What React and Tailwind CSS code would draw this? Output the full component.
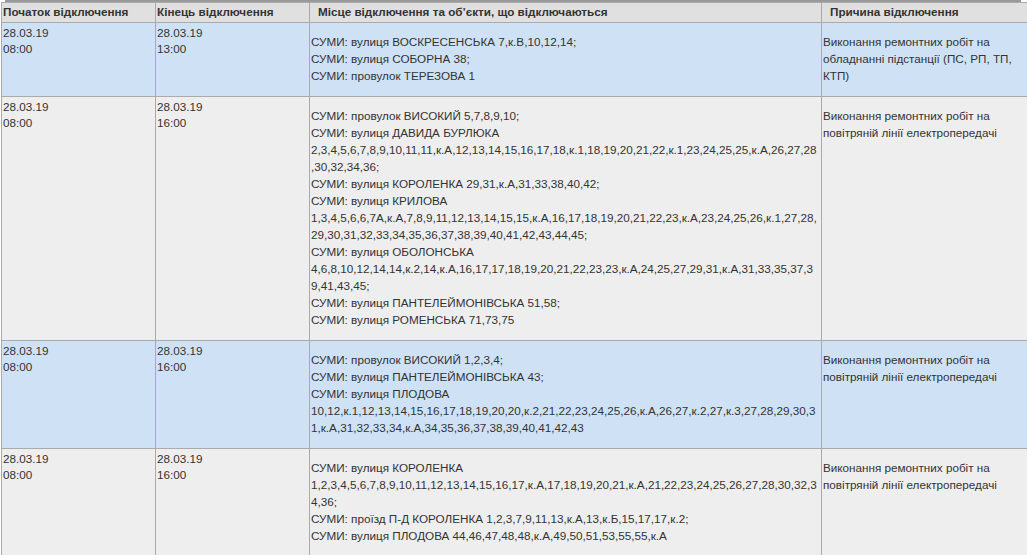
const rows = [
  {
    end: "13:00",
    blue: true,
    places: [
      "СУМИ: вулиця ВОСКРЕСЕНСЬКА 7,к.В,10,12,14;",
      "СУМИ: вулиця СОБОРНА 38;",
      "СУМИ: провулок ТЕРЕЗОВА 1",
    ],
    reason: ["Виконання ремонтних робіт на", "обладнанні підстанції (ПС, РП, ТП,", "КТП)"],
  },
  {
    end: "16:00",
    places: [
      "СУМИ: провулок ВИСОКИЙ 5,7,8,9,10;",
      "СУМИ: вулиця ДАВИДА БУРЛЮКА",
      "2,3,4,5,6,7,8,9,10,11,11,к.А,12,13,14,15,16,17,18,к.1,18,19,20,21,22,к.1,23,24,25,25,к.А,26,27,28",
      ",30,32,34,36;",
      "СУМИ: вулиця КОРОЛЕНКА 29,31,к.А,31,33,38,40,42;",
      "СУМИ: вулиця КРИЛОВА",
      "1,3,4,5,6,6,7А,к.А,7,8,9,11,12,13,14,15,15,к.А,16,17,18,19,20,21,22,23,к.А,23,24,25,26,к.1,27,28,",
      "29,30,31,32,33,34,35,36,37,38,39,40,41,42,43,44,45;",
      "СУМИ: вулиця ОБОЛОНСЬКА",
      "4,6,8,10,12,14,14,к.2,14,к.А,16,17,17,18,19,20,21,22,23,23,к.А,24,25,27,29,31,к.А,31,33,35,37,3",
      "9,41,43,45;",
      "СУМИ: вулиця ПАНТЕЛЕЙМОНІВСЬКА 51,58;",
      "СУМИ: вулиця РОМЕНСЬКА 71,73,75",
    ],
    reason: ["Виконання ремонтних робіт на", "повітряній лінії електропередачі"],
  },
  {
    end: "16:00",
    blue: true,
    places: [
      "СУМИ: провулок ВИСОКИЙ 1,2,3,4;",
      "СУМИ: вулиця ПАНТЕЛЕЙМОНІВСЬКА 43;",
      "СУМИ: вулиця ПЛОДОВА",
      "10,12,к.1,12,13,14,15,16,17,18,19,20,20,к.2,21,22,23,24,25,26,к.А,26,27,к.2,27,к.3,27,28,29,30,3",
      "1,к.А,31,32,33,34,к.А,34,35,36,37,38,39,40,41,42,43",
    ],
    reason: ["Виконання ремонтних робіт на", "повітряній лінії електропередачі"],
  },
  {
    end: "16:00",
    places: [
      "СУМИ: вулиця КОРОЛЕНКА",
      "1,2,3,4,5,6,7,8,9,10,11,12,13,14,15,16,17,к.А,17,18,19,20,21,к.А,21,22,23,24,25,26,27,28,30,32,3",
      "4,36;",
      "СУМИ: проїзд П-Д КОРОЛЕНКА 1,2,3,7,9,11,13,к.А,13,к.Б,15,17,17,к.2;",
      "СУМИ: вулиця ПЛОДОВА 44,46,47,48,48,к.А,49,50,51,53,55,55,к.А",
    ],
    reason: ["Виконання ремонтних робіт на", "повітряній лінії електропередачі"],
  },
];

function Lines({ items }) {
  return items.map((line) => (
    <div key={line} className="whitespace-nowrap">
      {line}
    </div>
  ));
}

export default function App() {
  return (
    <div className="h-[555px] w-[1027px] overflow-hidden bg-white pl-px font-['Liberation_Sans',Arial,sans-serif] text-[11.7px] text-[#333]">
      <div className="ml-1 mr-1.5 h-0.5 bg-[#999]" />
      <table className="w-[1030px] table-fixed border-collapse">
        <thead>
          <tr className="h-5 bg-[#e0e0e0] text-left font-bold leading-4">
            <th className="w-[154px] border border-[#aaa] px-px pt-0 pb-0.5 font-bold">Початок відключення</th>
            <th className="w-[154px] border border-[#aaa] px-px pt-0 pb-0.5 font-bold">Кінець відключення</th>
            <th className="w-[512px] border border-[#aaa] pt-0 pb-0.5 pl-2 font-bold">Місце відключення та об’єкти, що відключаються</th>
            <th className="border border-[#aaa] pt-0 pb-0.5 pl-2 font-bold">Причина відключення</th>
          </tr>
        </thead>
        <tbody>
          {rows.map((row, i) => (
            <tr key={i} className={row.blue ? "bg-[#cfe2f5]" : "bg-[#eeeeee]"}>
              <td className="border border-[#aaa] px-px pt-0.5 align-top leading-4">
                <div>28.03.19</div>
                <div>08:00</div>
              </td>
              <td className="border border-[#aaa] px-px pt-0.5 align-top leading-4">
                <div>28.03.19</div>
                <div>{row.end}</div>
              </td>
              <td className="border border-[#aaa] px-px pt-2.5 pb-3 align-top leading-[17px]">
                <Lines items={row.places} />
              </td>
              <td className="border border-[#aaa] px-px pt-2.5 pb-3 align-top leading-[17px]">
                <Lines items={row.reason} />
              </td>
            </tr>
          ))}
        </tbody>
      </table>
    </div>
  );
}
